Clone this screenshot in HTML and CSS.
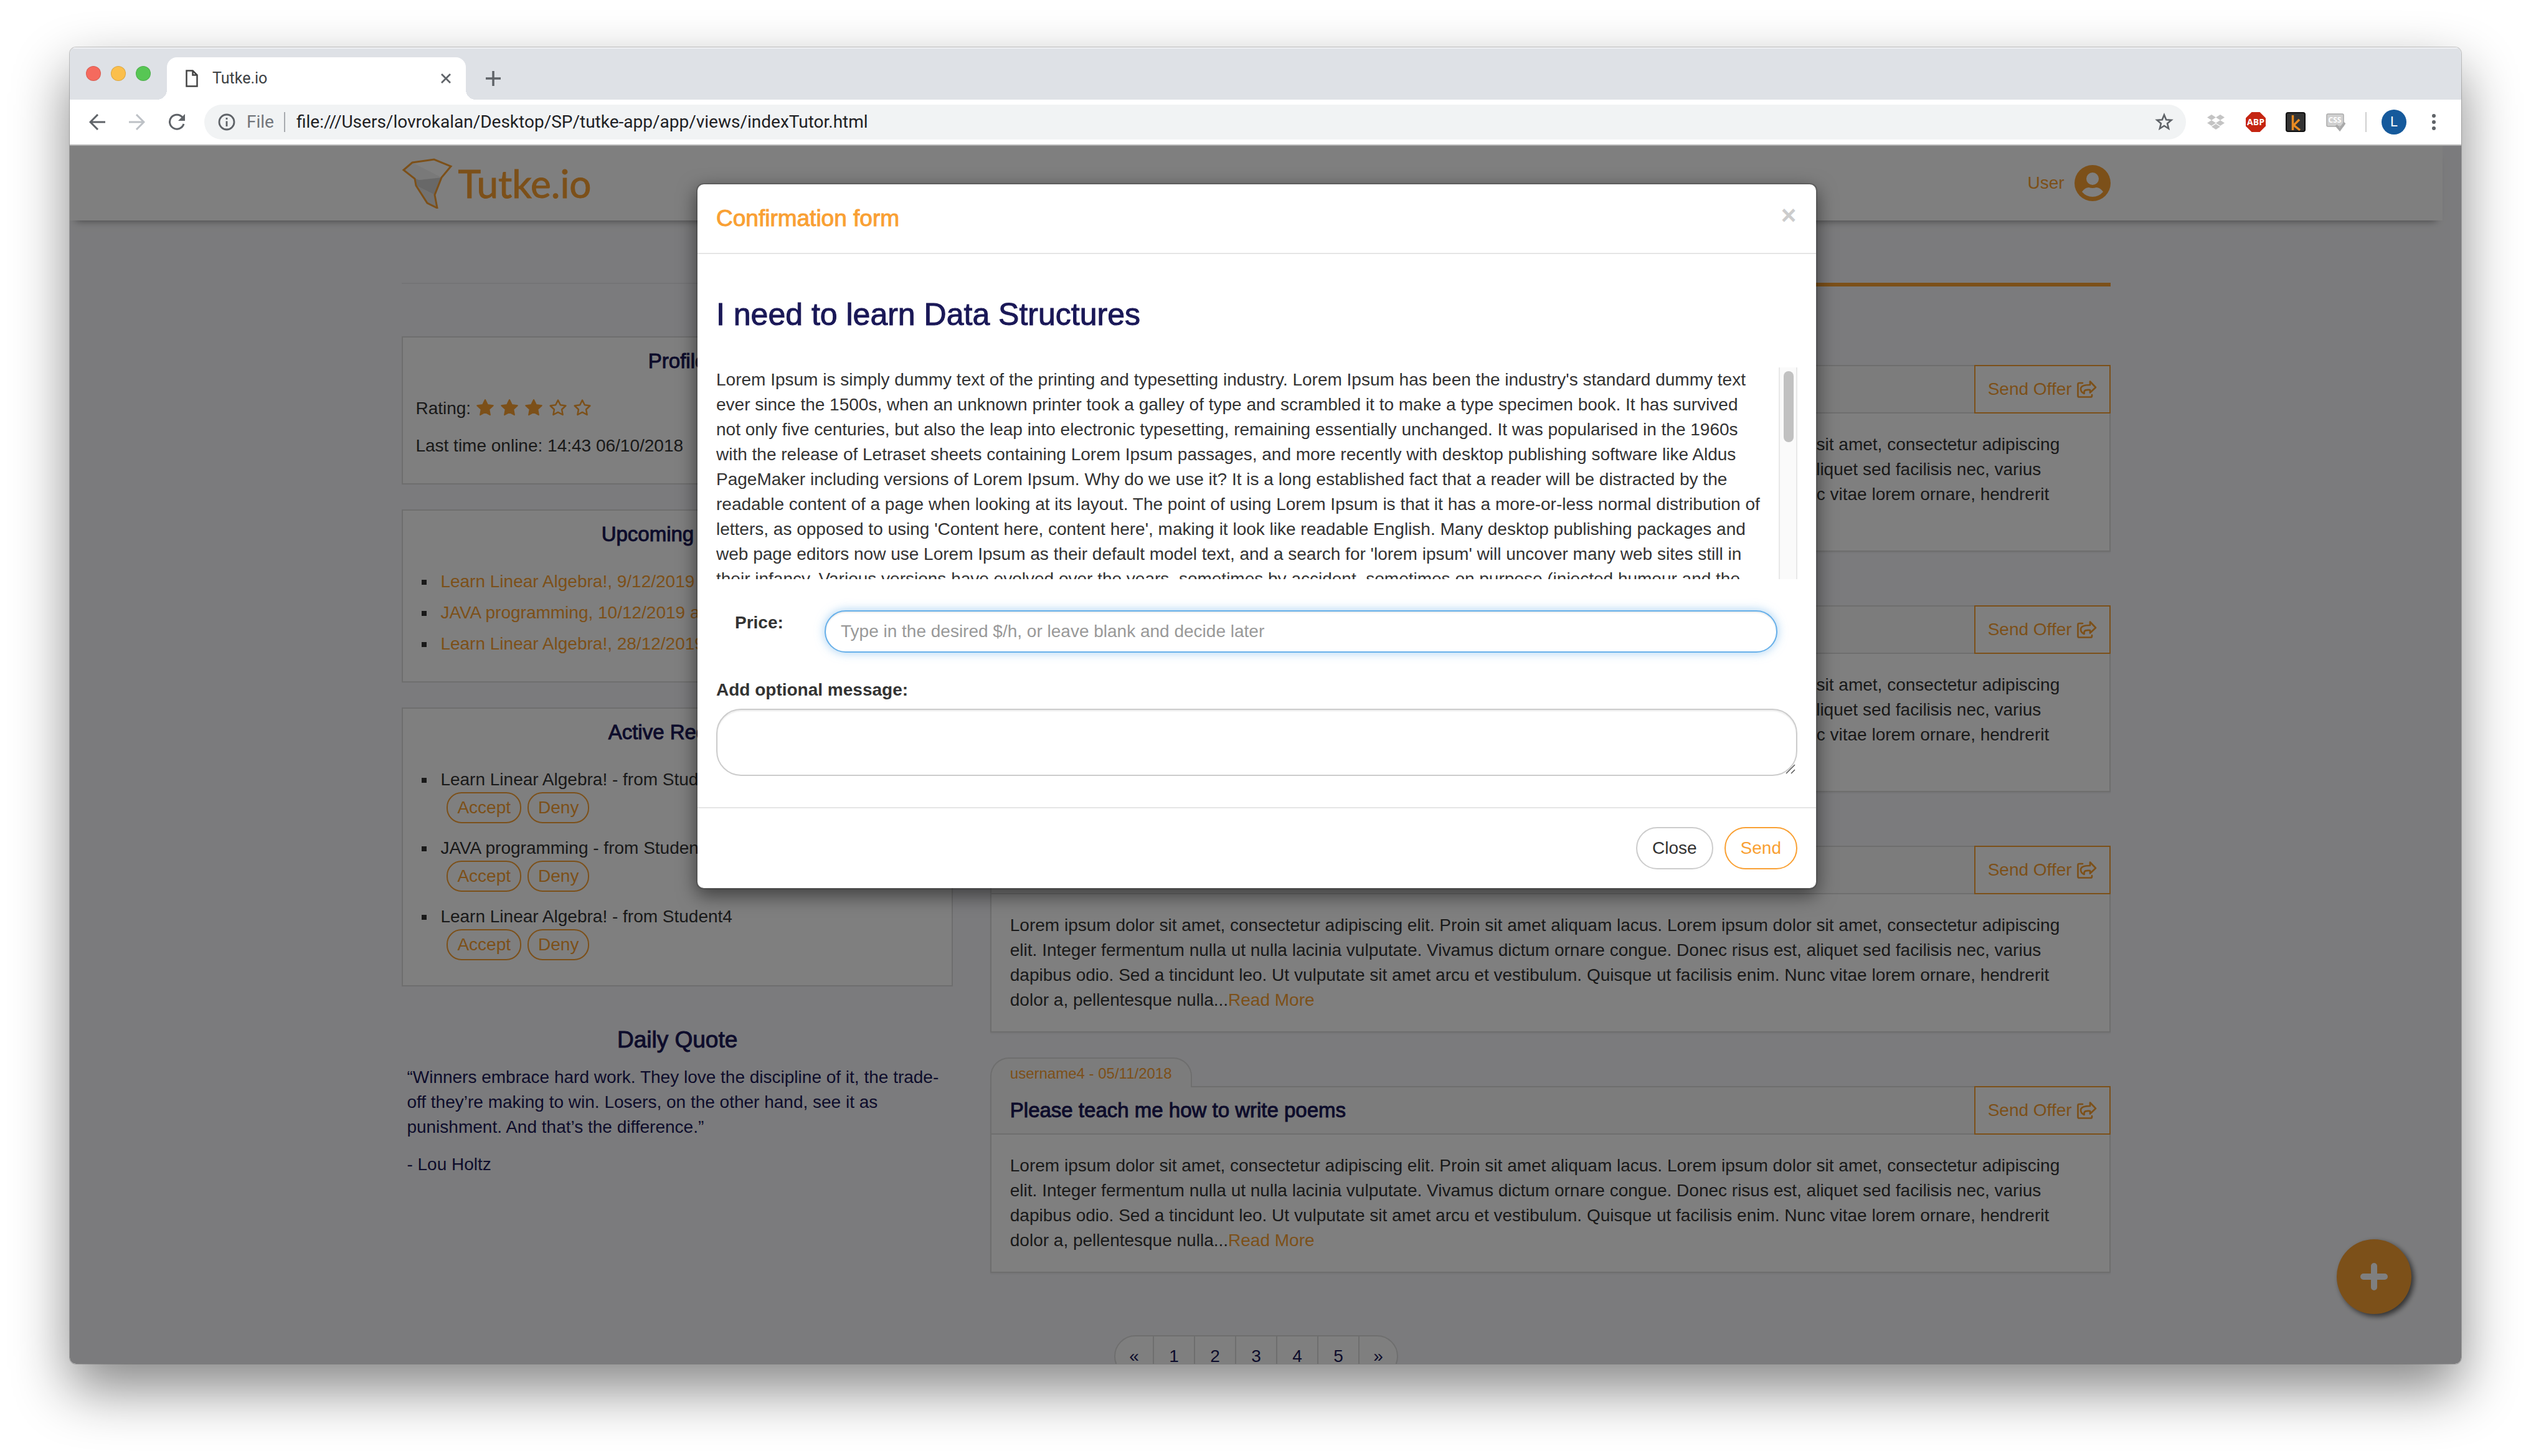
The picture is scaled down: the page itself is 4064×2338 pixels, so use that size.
FILE: index.html
```html
<!DOCTYPE html>
<html lang="en">
<head>
<meta charset="utf-8">
<title>Tutke.io</title>
<link rel="stylesheet" href="styles.css">
</head>
<body>
<svg class="defs" aria-hidden="true">
  <symbol id="star-full" viewBox="0 0 30 28"><path d="M15 2l3.900 8 8.900 1.200-6.500 6.200 1.600 8.800-7.900-4.300-7.900 4.300 1.600-8.800-6.500-6.200 8.900-1.200z" fill="currentColor" stroke="currentColor" stroke-width="2" stroke-linejoin="round"/></symbol>
  <symbol id="star-open" viewBox="0 0 30 28"><path d="M15 2.500l3.800 7.800 8.600 1.200-6.300 6 1.500 8.500-7.600-4.100-7.600 4.100 1.500-8.500-6.300-6 8.600-1.200z" fill="none" stroke="currentColor" stroke-width="2.500" stroke-linejoin="round"/></symbol>
  <symbol id="share" viewBox="0 0 32 28"><path d="M9 4H3.500Q1.500 4 1.500 6v18.500q0 2 2 2H22q2 0 2-2V23M21 1.500l9 9.500-9 8.500V15q-9.500-1-9.500 3.500V21Q6 18.500 6 13.500 6 7 21 7z" fill="none" stroke="currentColor" stroke-width="2.700" stroke-linejoin="round" stroke-linecap="round"/></symbol>
</svg>

<div class="window">
  <div class="tabstrip">
    <div class="lights"><span class="light red"></span><span class="light yellow"></span><span class="light green"></span></div>
    <div class="tab">
      <svg class="tab-doc" viewBox="0 0 20 28"><path d="M1.500 1.500h10l7 7v18h-17zM11.500 1.500v7h7" fill="none" stroke="#444" stroke-width="2.500"/></svg>
      <span class="tab-title">Tutke.io</span>
      <button class="plain tab-close" aria-label="Close tab"><svg viewBox="0 0 16 16"><path d="M1 1l14 14M15 1L1 15" stroke="#5f6368" stroke-width="2.800"/></svg></button>
    </div>
    <button class="plain new-tab" aria-label="New tab"><svg viewBox="0 0 24 24"><path d="M12 0v24M0 12h24" stroke="#5f6368" stroke-width="3.500"/></svg></button>
  </div>
  <div class="toolbar">
    <button class="plain tool" aria-label="Back"><svg width="26" height="26" viewBox="0 0 26 26"><path d="M26 13H3M14 1L2 13l12 12" fill="none" stroke="#5f6368" stroke-width="3"/></svg></button>
    <button class="plain tool" aria-label="Forward"><svg width="26" height="26" viewBox="0 0 26 26"><path d="M0 13h23M12 1l12 12-12 12" fill="none" stroke="#bdc1c6" stroke-width="3"/></svg></button>
    <button class="plain tool" aria-label="Reload"><svg width="28" height="28" viewBox="0 0 28 28"><path d="M23 6.500A11.500 11.500 0 1 0 25 17" fill="none" stroke="#5f6368" stroke-width="3"/><path d="M27 1v11H16z" fill="#5f6368"/></svg></button>
    <div class="omnibox">
      <svg width="28" height="28" viewBox="0 0 28 28"><circle cx="14" cy="14" r="12" fill="none" stroke="#5f6368" stroke-width="2.800"/><path d="M14 12.500V21M14 7v3" stroke="#5f6368" stroke-width="2.800"/></svg>
      <span class="scheme">File</span>
      <span class="rule"></span>
      <span class="url">file:///Users/lovrokalan/Desktop/SP/tutke-app/app/views/indexTutor.html</span>
      <svg width="30" height="30" viewBox="0 0 30 30"><path d="M15 3.500l3.200 7.800 8.300.6-6.400 5.400 2 8.200-7.100-4.500-7.100 4.500 2-8.200-6.400-5.400 8.300-.6z" fill="none" stroke="#5f6368" stroke-width="2.600"/></svg>
    </div>
    <button class="plain tool" aria-label="Dropbox"><svg width="28" height="32" viewBox="0 0 28 32" fill="#c4c4c4"><path d="M7 4l7 4.500L7 13 0 8.500zM21 4l7 4.500L21 13l-7-4.500zM7 13l7 4.500L7 22l-7-4.500zM21 13l7 4.500-7 4.500-7-4.500zM14 19l7 4.500-7 4.500-7-4.500z"/></svg></button>
    <button class="plain tool" aria-label="Adblock Plus"><svg width="32" height="32" viewBox="0 0 32 32"><path d="M9.500 0h13L32 9.500v13L22.500 32h-13L0 22.500v-13z" fill="#c52512"/><text x="16" y="21" text-anchor="middle" class="abp">ABP</text></svg></button>
    <button class="plain tool" aria-label="Kango"><svg width="32" height="32" viewBox="0 0 32 32"><rect width="32" height="32" rx="4" fill="#111"/><rect x="2" y="2" width="28" height="28" rx="2" fill="#333"/><path d="M11.500 5v24M22 12l-9 9 10 8" fill="none" stroke="#e88b22" stroke-width="3.500"/></svg></button>
    <button class="plain tool" aria-label="CSS checker"><svg width="32" height="30" viewBox="0 0 32 30"><rect x="2" y="2" width="27" height="20" rx="2" fill="#d0d0d0" stroke="#aaa" stroke-width="1.500"/><text x="15" y="16" text-anchor="middle" class="csst">CSS</text><path d="M17 20l6 7 8-11" fill="none" stroke="#aaa" stroke-width="4"/></svg></button>
    <span class="bar-rule"></span>
    <button class="plain tool"><span class="avatar">L</span></button>
    <button class="plain tool" aria-label="Menu"><svg width="8" height="28" viewBox="0 0 8 28" fill="#5f6368"><circle cx="4" cy="4" r="3"/><circle cx="4" cy="14" r="3"/><circle cx="4" cy="24" r="3"/></svg></button>
  </div>

  <div class="page">
    <header class="site-header">
      <div class="container header-row">
        <a class="brand" href="#">
          <svg class="brand-mark" viewBox="0 0 82 82"><path d="M3 20L17 8 64 32 28 36 21 34z" fill="#f2f2f2"/><path d="M21 34L28 36 64 32 53 60 23 45z" fill="#d0d0d0"/><path d="M23 45L53 60 57 81 41 73z" fill="#e2e2e2"/><path d="M3 20L17 8 52 3 79 14 64 32 53 60 57 81 41 73 23 45 21 34z" fill="none" stroke="#f9a033" stroke-width="3"/></svg>
          <span>Tutke.io</span>
        </a>
        <a class="user" href="#">User
          <svg width="58" height="58" viewBox="0 0 58 58"><circle cx="29" cy="29" r="29" fill="#f9a033"/><circle cx="29" cy="22" r="10" fill="#fff"/><path d="M12 43q5-7 11-7 6 2 12 0 6 0 11 7-7 8-17 8t-17-8z" fill="#fff"/></svg>
        </a>
      </div>
    </header>

    <nav class="container views"><a href="#">My lessons</a><a class="current" href="#">Requests</a></nav>

    <main class="container columns">
      <aside class="side">
        <section class="card">
          <h4>Profile</h4>
          <p>Rating: <span class="stars"><svg><use href="#star-full"/></svg><svg><use href="#star-full"/></svg><svg><use href="#star-full"/></svg><svg><use href="#star-open"/></svg><svg><use href="#star-open"/></svg></span></p>
          <p>Last time online: 14:43 06/10/2018</p>
        </section>
        <section class="card">
          <h4>Upcoming Dates</h4>
          <ul class="dates">
            <li><a href="#">Learn Linear Algebra!, 9/12/2019 at 14:00</a></li>
            <li><a href="#">JAVA programming, 10/12/2019 at 14:00</a></li>
            <li><a href="#">Learn Linear Algebra!, 28/12/2019 at 14:00</a></li>
          </ul>
        </section>
        <section class="card">
          <h4>Active Request</h4>
          <ul class="requests">
            <li>Learn Linear Algebra! - from Student2<div class="answers"><button>Accept</button><button>Deny</button></div></li>
            <li>JAVA programming - from Student3<div class="answers"><button>Accept</button><button>Deny</button></div></li>
            <li>Learn Linear Algebra! - from Student4<div class="answers"><button>Accept</button><button>Deny</button></div></li>
          </ul>
        </section>
        <section class="quote">
          <h3>Daily Quote</h3>
          <p>“Winners embrace hard work. They love the discipline of it, the trade-off they’re making to win. Losers, on the other hand, see it as punishment. And that’s the difference.”</p>
          <p>- Lou Holtz</p>
        </section>
      </aside>

      <div class="feed">
        <article class="offer">
          <span class="author">username1 - 05/11/2018</span>
          <div class="panel">
            <div class="panel-head"><h4>I need to learn Data Structures</h4><button class="send-offer">Send Offer <svg><use href="#share"/></svg></button></div>
            <p>Lorem ipsum dolor sit amet, consectetur adipiscing elit. Proin sit amet aliquam lacus. Lorem ipsum dolor sit amet, consectetur adipiscing elit. Integer fermentum nulla ut nulla lacinia vulputate. Vivamus dictum ornare congue. Donec risus est, aliquet sed facilisis nec, varius dapibus odio. Sed a tincidunt leo. Ut vulputate sit amet arcu et vestibulum. Quisque ut facilisis enim. Nunc vitae lorem ornare, hendrerit dolor a, pellentesque nulla...<a href="#">Read More</a></p>
          </div>
        </article>
        <article class="offer">
          <span class="author">username2 - 05/11/2018</span>
          <div class="panel">
            <div class="panel-head"><h4>Help with Java</h4><button class="send-offer">Send Offer <svg><use href="#share"/></svg></button></div>
            <p>Lorem ipsum dolor sit amet, consectetur adipiscing elit. Proin sit amet aliquam lacus. Lorem ipsum dolor sit amet, consectetur adipiscing elit. Integer fermentum nulla ut nulla lacinia vulputate. Vivamus dictum ornare congue. Donec risus est, aliquet sed facilisis nec, varius dapibus odio. Sed a tincidunt leo. Ut vulputate sit amet arcu et vestibulum. Quisque ut facilisis enim. Nunc vitae lorem ornare, hendrerit dolor a, pellentesque nulla...<a href="#">Read More</a></p>
          </div>
        </article>
        <article class="offer">
          <span class="author">username3 - 05/11/2018</span>
          <div class="panel">
            <div class="panel-head"><h4>Algebra exam</h4><button class="send-offer">Send Offer <svg><use href="#share"/></svg></button></div>
            <p>Lorem ipsum dolor sit amet, consectetur adipiscing elit. Proin sit amet aliquam lacus. Lorem ipsum dolor sit amet, consectetur adipiscing elit. Integer fermentum nulla ut nulla lacinia vulputate. Vivamus dictum ornare congue. Donec risus est, aliquet sed facilisis nec, varius dapibus odio. Sed a tincidunt leo. Ut vulputate sit amet arcu et vestibulum. Quisque ut facilisis enim. Nunc vitae lorem ornare, hendrerit dolor a, pellentesque nulla...<a href="#">Read More</a></p>
          </div>
        </article>
        <article class="offer">
          <span class="author">username4 - 05/11/2018</span>
          <div class="panel">
            <div class="panel-head"><h4>Please teach me how to write poems</h4><button class="send-offer">Send Offer <svg><use href="#share"/></svg></button></div>
            <p>Lorem ipsum dolor sit amet, consectetur adipiscing elit. Proin sit amet aliquam lacus. Lorem ipsum dolor sit amet, consectetur adipiscing elit. Integer fermentum nulla ut nulla lacinia vulputate. Vivamus dictum ornare congue. Donec risus est, aliquet sed facilisis nec, varius dapibus odio. Sed a tincidunt leo. Ut vulputate sit amet arcu et vestibulum. Quisque ut facilisis enim. Nunc vitae lorem ornare, hendrerit dolor a, pellentesque nulla...<a href="#">Read More</a></p>
          </div>
        </article>
      </div>
    </main>

    <nav class="pages" aria-label="Pages"><a href="#">«</a><a href="#">1</a><a href="#">2</a><a href="#">3</a><a href="#">4</a><a href="#">5</a><a href="#">»</a></nav>

    <button class="fab" aria-label="Add request"><svg width="44" height="44" viewBox="0 0 44 44"><path d="M22 5v34M5 22h34" stroke="#fff" stroke-width="10" stroke-linecap="round"/></svg></button>

    <div class="backdrop">
      <form class="modal" role="dialog" aria-labelledby="modal-title">
        <div class="modal-header">
          <h4 id="modal-title">Confirmation form</h4>
          <button type="button" class="plain dismiss" aria-label="Close">×</button>
        </div>
        <div class="modal-body">
          <h3>I need to learn Data Structures</h3>
          <div class="scroller">
            <p>Lorem Ipsum is simply dummy text of the printing and typesetting industry. Lorem Ipsum has been the industry's standard dummy text<br>
            ever since the 1500s, when an unknown printer took a galley of type and scrambled it to make a type specimen book. It has survived<br>
            not only five centuries, but also the leap into electronic typesetting, remaining essentially unchanged. It was popularised in the 1960s<br>
            with the release of Letraset sheets containing Lorem Ipsum passages, and more recently with desktop publishing software like Aldus<br>
            PageMaker including versions of Lorem Ipsum. Why do we use it? It is a long established fact that a reader will be distracted by the<br>
            readable content of a page when looking at its layout. The point of using Lorem Ipsum is that it has a more-or-less normal distribution of<br>
            letters, as opposed to using 'Content here, content here', making it look like readable English. Many desktop publishing packages and<br>
            web page editors now use Lorem Ipsum as their default model text, and a search for 'lorem ipsum' will uncover many web sites still in<br>
            their infancy. Various versions have evolved over the years, sometimes by accident, sometimes on purpose (injected humour and the</p>
            <div class="track"><div class="thumb"></div></div>
          </div>
          <div class="price">
            <label for="price">Price:</label>
            <input id="price" type="text" placeholder="Type in the desired $/h, or leave blank and decide later">
          </div>
          <label class="message-label" for="message">Add optional message:</label>
          <div class="message">
            <textarea id="message"></textarea>
            <svg class="grip" viewBox="0 0 16 16"><path d="M1 15L15 1M9 15l6-6" stroke="#555" stroke-width="1.500"/></svg>
          </div>
        </div>
        <div class="modal-footer">
          <button type="button" class="btn">Close</button>
          <button type="button" class="btn primary">Send</button>
        </div>
      </form>
    </div>
  </div>
</div>
</body>
</html>
```
FILE: styles.css
```css
* { box-sizing: border-box; }

body {
  margin: 0;
  padding: 76px 112px 148px;
  background: #fff;
  color: #333;
  font: 28px/40px "Liberation Sans", Arial, sans-serif;
}

h3, h4, p, ul { margin: 0; padding: 0; }
h3, h4 {
  color: #1a1857;
  font-weight: normal;
  -webkit-text-stroke: 1px currentColor;
}
h3 { font-size: 37px; }
h4 { font-size: 33px; line-height: 36px; }
a { color: #f9a033; text-decoration: none; }
button, input, textarea { font: inherit; color: inherit; }
svg { display: block; flex: none; }
.defs { position: absolute; width: 0; height: 0; }
.plain { border: 0; padding: 0; background: none; }

/* Browser window */
.window {
  display: flex;
  flex-direction: column;
  height: calc(100vh - 224px);
  border-radius: 10px;
  overflow: hidden;
  box-shadow: 0 0 0 1px rgba(0, 0, 0, .2), 0 40px 90px rgba(0, 0, 0, .48);
}
.tabstrip {
  display: flex;
  align-items: flex-end;
  height: 84px;
  background: #dee1e6;
  box-shadow: inset 0 2px 0 #f0f1f4;
}
.lights { display: flex; gap: 16px; align-self: center; width: 156px; padding-left: 26px; }
.light { width: 24px; height: 24px; border-radius: 50%; border: 1px solid rgba(0, 0, 0, .12); }
.red { background: #f56a5e; }
.yellow { background: #fbbf4c; }
.green { background: #57c654; }
.tab {
  position: relative;
  display: flex;
  align-items: center;
  width: 480px;
  height: 68px;
  padding: 0 24px 0 30px;
  border-radius: 16px 16px 0 0;
  background: #fff;
}
.tab::before, .tab::after {
  content: "";
  position: absolute;
  bottom: 0;
  width: 16px;
  height: 16px;
}
.tab::before { right: 100%; background: radial-gradient(circle at 0 0, transparent 16px, #fff 16px); }
.tab::after { left: 100%; background: radial-gradient(circle at 100% 0, transparent 16px, #fff 16px); }
.tab-doc { width: 20px; height: 28px; }
.tab-title { flex: 1; margin-left: 23px; color: #3c4043; font: 25px/30px Roboto, sans-serif; }
.tab-close svg { width: 16px; height: 16px; }
.new-tab { align-self: center; margin: 16px 0 0 32px; }
.new-tab svg { width: 24px; height: 24px; }

.toolbar {
  display: flex;
  align-items: center;
  gap: 16px;
  height: 74px;
  padding: 0 20px;
  background: #fff;
  border-bottom: 2px solid #b4b4b4;
}
.tool { display: grid; place-items: center; width: 48px; height: 48px; }
.omnibox {
  display: flex;
  flex: 1;
  align-items: center;
  height: 56px;
  margin: 0 8px 0 4px;
  padding: 0 20px 0 22px;
  border-radius: 28px;
  background: #f1f3f4;
  font-family: Roboto, sans-serif;
}
.scheme { margin-left: 18px; color: #72767b; }
.rule { width: 2px; height: 32px; margin: 0 18px 0 16px; background: #a8abaf; }
.url { flex: 1; color: #202124; }
.bar-rule { width: 2px; height: 32px; margin: 0 4px 0 8px; background: #cfcfcf; }
.avatar {
  width: 40px;
  border-radius: 50%;
  background: #165a9c;
  color: #fff;
  font: 22px/40px Roboto, sans-serif;
}
.abp { font: bold 14px "Open Sans", sans-serif; fill: #fff; }
.csst { font: bold 12px "Open Sans", sans-serif; fill: #fff; }

/* Site */
.page { position: relative; flex: 1; overflow: hidden; background: #f7f7fa; padding-right: 30px; }
.container { width: 72%; margin: 0 auto; }
.site-header { height: 120px; background: #fff; box-shadow: 0 10px 12px -10px rgba(0, 0, 0, .5); }
.header-row { display: flex; align-items: center; justify-content: space-between; height: 120px; }
.brand { display: flex; align-items: center; gap: 8px; font: 62px/80px Lato, sans-serif; -webkit-text-stroke: 1px currentColor; }
.brand-mark { width: 82px; height: 82px; }
.user { display: flex; align-items: center; gap: 16px; }

.views { display: flex; height: 106px; text-align: center; }
.views a { flex: 1; padding-top: 40px; border-bottom: 2px solid #e9e9ec; height: 102px; }
.views .current { height: 106px; border-bottom: 6px solid #f9a033; }

.columns { display: grid; grid-template-columns: 884fr 1798fr; gap: 60px; padding-top: 80px; }
.card {
  margin-bottom: 40px;
  padding: 20px;
  border: 2px solid #ddd;
  background: #fff;
}
.card h4 { margin-bottom: 38px; text-align: center; }
.card p { margin-bottom: 20px; }
.stars { display: inline-flex; gap: 9px; vertical-align: -3px; color: #f9a033; }
.stars svg { width: 30px; height: 28px; }
.card ul { list-style: none; }
.card li { position: relative; padding-left: 40px; }
.card li::before {
  content: "";
  position: absolute;
  left: 10px;
  top: 17px;
  width: 8px;
  height: 8px;
  background: currentColor;
}
.card .dates { padding-bottom: 10px; }
.dates li { margin-bottom: 10px; }
.requests li { padding-bottom: 20px; }
.answers { display: flex; gap: 10px; padding-left: 10px; }
.answers button {
  height: 50px;
  padding: 0 15px;
  border: 2px solid #f9a033;
  border-radius: 24px;
  background: #fff;
  color: #f9a033;
}
.quote { padding: 26px 8px 0; color: #1a1857; }
.quote h3 { margin-bottom: 20px; text-align: center; }
.quote p { margin-bottom: 20px; }

.offer { margin-bottom: 40px; }
.author {
  position: relative;
  display: block;
  width: fit-content;
  height: 48px;
  margin-bottom: -2px;
  padding: 4px 30px 0;
  border: 2px solid #ddd;
  border-bottom: 0;
  border-radius: 30px 30px 0 0;
  background: #f8f8f8;
  color: #f9a033;
  font-size: 24px;
}
.panel { border: 2px solid #ddd; background: #fff; box-shadow: 0 2px 2px rgba(0, 0, 0, .05); }
.panel-head {
  display: flex;
  align-items: center;
  justify-content: space-between;
  height: 76px;
  padding-left: 30px;
  border-bottom: 2px solid #ddd;
  background: #f8f8f8;
}
.send-offer {
  display: flex;
  align-items: center;
  gap: 8px;
  height: 78px;
  margin: 0 -2px 0 0;
  padding: 0 20px;
  border: 2px solid #f9a033;
  background: #fff;
  color: #f9a033;
}
.send-offer svg { width: 32px; height: 28px; }
.panel p { padding: 30px; }

.pages { display: flex; justify-content: center; margin-top: 60px; text-align: center; }
.pages a {
  width: 68px;
  height: 68px;
  margin-left: -2px;
  padding: 12px 0;
  border: 2px solid #ddd;
  background: #fff;
  color: #1a1857;
}
.pages a:first-child { width: 64px; margin-left: 0; border-radius: 34px 0 0 34px; }
.pages a:last-child { width: 64px; border-radius: 0 34px 34px 0; }

.fab {
  position: absolute;
  right: 80px;
  bottom: 80px;
  display: grid;
  place-items: center;
  width: 120px;
  height: 120px;
  border: 0;
  border-radius: 50%;
  background: #f9a033;
  box-shadow: 4px 4px 8px rgba(0, 0, 0, .6);
}

/* Confirmation dialog */
.backdrop { position: absolute; inset: 0; padding: 60px 28px 0 0; background: rgba(0, 0, 0, .5); }
.modal {
  width: 1800px;
  max-width: 100%;
  margin: 0 auto;
  border: 2px solid rgba(0, 0, 0, .2);
  border-radius: 12px;
  background: #fff;
  background-clip: padding-box;
  box-shadow: 0 10px 30px rgba(0, 0, 0, .5);
}
.modal-header {
  display: flex;
  align-items: flex-start;
  justify-content: space-between;
  padding: 30px;
  border-bottom: 2px solid #e5e5e5;
}
.modal-header h4 { color: #f9a033; font-size: 37px; line-height: 50px; }
.dismiss { width: 28px; color: #ccc; font-size: 42px; font-weight: bold; }
.modal-body { padding: 70px 30px 50px; }
.modal-body h3 { margin-bottom: 58px; font-size: 50px; line-height: 54px; }
.scroller { display: flex; height: 340px; overflow: hidden; }
.scroller p { flex: 1; }
.track { width: 30px; padding: 6px; border: solid #e8e8e8; border-width: 0 2px; background: #fafafa; }
.thumb { width: 16px; height: 114px; border-radius: 8px; background: #c1c1c1; }
.price { display: flex; align-items: flex-start; justify-content: space-between; padding: 50px 32px 40px 30px; }
label { font-weight: bold; }
.price input {
  width: 1530px;
  height: 68px;
  padding: 0 24px;
  border: 2px solid #66afe9;
  border-radius: 34px;
  outline: 0;
  background: #fff;
  box-shadow: inset 0 2px 2px rgba(0, 0, 0, .08), 0 0 16px rgba(102, 175, 233, .6);
}
.price input::placeholder { color: #999; opacity: 1; }
.message-label { display: block; margin-bottom: 10px; }
.message { position: relative; }
textarea {
  display: block;
  width: 100%;
  height: 108px;
  padding: 12px 24px;
  border: 2px solid #ccc;
  border-radius: 40px;
  background: #fff;
  box-shadow: inset 0 2px 2px rgba(0, 0, 0, .08);
  resize: none;
}
.grip { position: absolute; right: 3px; bottom: 3px; width: 16px; height: 16px; }
.modal-footer { display: flex; justify-content: flex-end; gap: 18px; padding: 30px; border-top: 2px solid #e5e5e5; }
.btn { height: 68px; padding: 0 24px; border: 2px solid #ccc; border-radius: 34px; background: #fff; }
.primary { border-color: #f9a033; color: #f9a033; }
```
